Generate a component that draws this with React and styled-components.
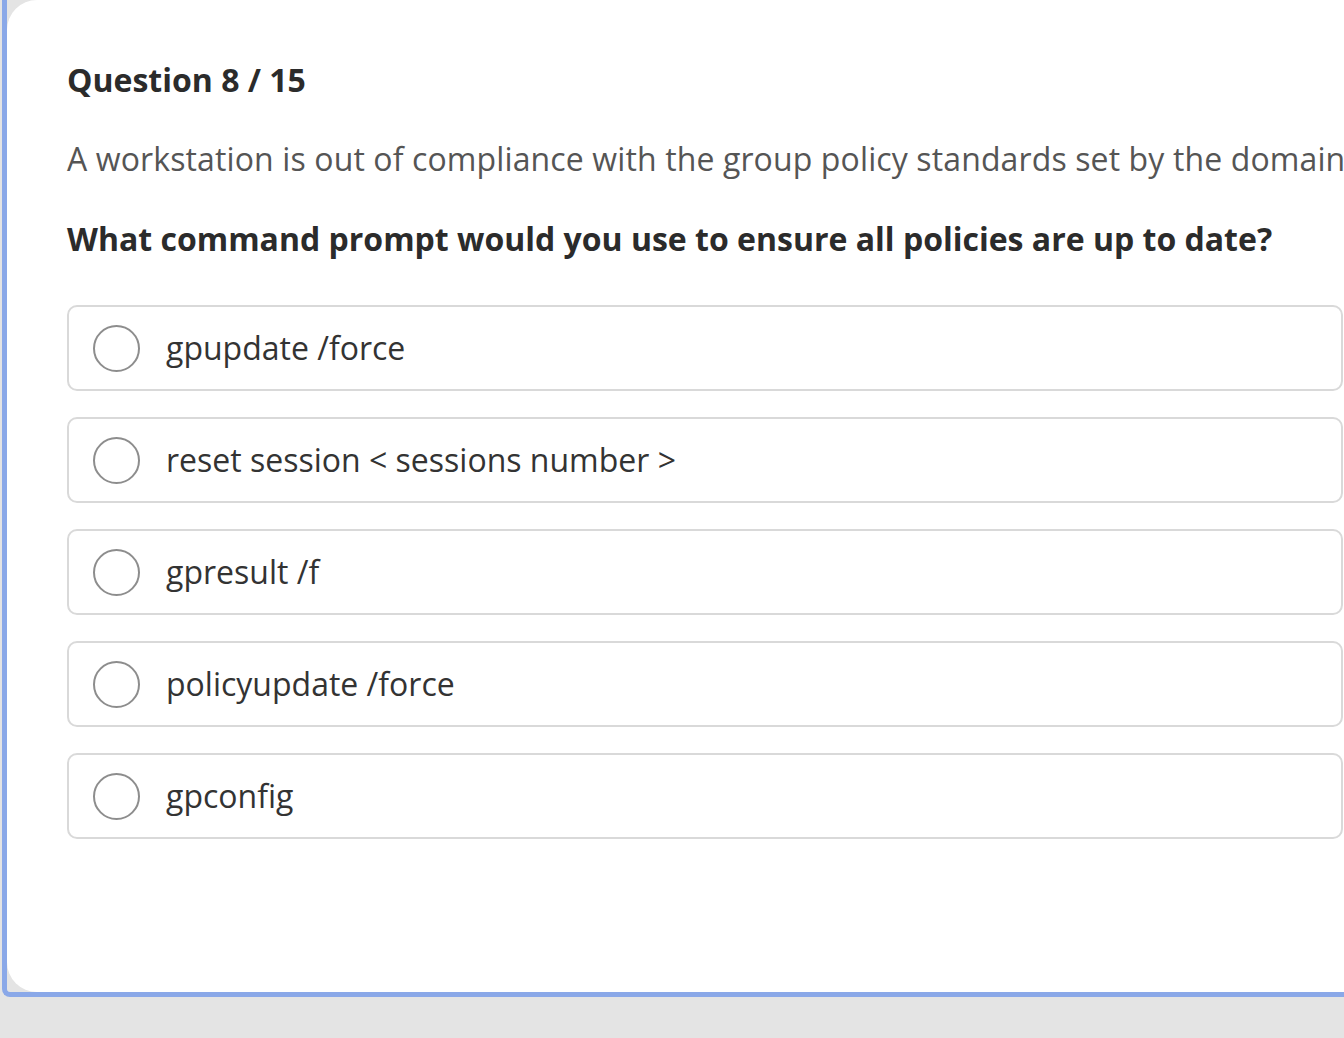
import styled, { createGlobalStyle } from "styled-components";

const GlobalStyle = createGlobalStyle`
    html, body {
        margin: 0;
        padding: 0;
        background: #e4e4e4;
        overflow: hidden;
        font-family: "Open Sans", "Noto Sans", sans-serif;
    }
`;

const options = [
    "gpupdate /force",
    "reset session < sessions number >",
    "gpresult /f",
    "policyupdate /force",
    "gpconfig",
];

function App() {
    return (
        <>
            <GlobalStyle />
            <Page>
                <Frame>
                    <Card>
                        <Title>Question 8 / 15</Title>
                        <Description>
                            A workstation is out of compliance with the group policy standards set by the domain controller.
                        </Description>
                        <Prompt>What command prompt would you use to ensure all policies are up to date?</Prompt>
                        <OptionList>
                            {options.map((label) => (
                                <Option key={label}>
                                    <Radio />
                                    <OptionLabel>{label}</OptionLabel>
                                </Option>
                            ))}
                        </OptionList>
                    </Card>
                </Frame>
            </Page>
        </>
    );
}

const Page = styled.div`
    width: 1344px;
    height: 1038px;
    overflow: hidden;
    background: #e4e4e4;
`;

const Frame = styled.div`
    margin-left: 2px;
    width: 1420px;
    height: 992px;
    border-left: 5px solid #8aa8e8;
    border-bottom: 5px solid #8aa8e8;
    border-bottom-left-radius: 8px;
    background: #e4e4e4;
`;

const Card = styled.div`
    box-sizing: border-box;
    width: 1397px;
    height: 992px;
    padding: 56px 61px 0 60px;
    background: #ffffff;
    border-radius: 30px 0 0 30px;
    display: flex;
    flex-direction: column;
`;

const Title = styled.div`
    font-size: 32px;
    line-height: 48px;
    font-weight: 700;
    color: #2b2b2b;
`;

const Description = styled.div`
    margin-top: 31px;
    font-size: 32px;
    line-height: 48px;
    letter-spacing: 0.12px;
    color: #555555;
    white-space: nowrap;
`;

const Prompt = styled.div`
    margin-top: 32px;
    font-size: 32px;
    line-height: 48px;
    font-weight: 700;
    color: #2b2b2b;
    white-space: nowrap;
`;

const OptionList = styled.div`
    margin-top: 42px;
    display: flex;
    flex-direction: column;
    gap: 26px;
`;

const Option = styled.div`
    box-sizing: border-box;
    height: 86px;
    padding: 0 24px;
    border: 2px solid #d9d9d9;
    border-radius: 10px;
    display: flex;
    align-items: center;
    gap: 26px;
    cursor: pointer;
`;

const Radio = styled.span`
    box-sizing: border-box;
    flex: none;
    width: 47px;
    height: 47px;
    border: 2px solid #8d8d8d;
    border-radius: 50%;
`;

const OptionLabel = styled.span`
    font-size: 32px;
    line-height: 48px;
    color: #333333;
`;

export default App;
